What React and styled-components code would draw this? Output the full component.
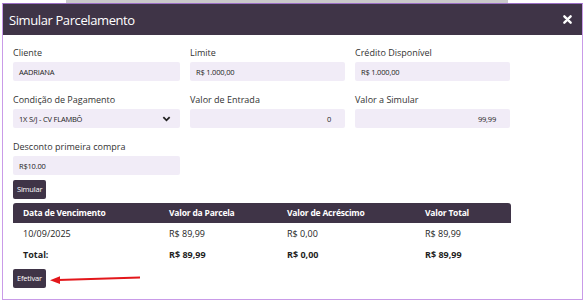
import styled, { createGlobalStyle } from "styled-components";

const GlobalStyle = createGlobalStyle`
  body {
    margin: 0;
    background: #ffffff;
    font-family: "Open Sans", "Noto Sans", sans-serif;
  }
`;

const rows = [
  { date: "10/09/2025", parcela: "R$ 89,99", acrescimo: "R$ 0,00", total: "R$ 89,99" },
];

function App() {
  return (
    <>
      <GlobalStyle />
      <Backdrop />
      <Modal>
        <Header>
          <Title>Simular Parcelamento</Title>
          <Close aria-label="Fechar">
            <svg width="9" height="9" viewBox="0 0 10 10">
              <path d="M1.5 1.5 L8.5 8.5 M8.5 1.5 L1.5 8.5" stroke="#fff" strokeWidth="2.6" strokeLinecap="round" />
            </svg>
          </Close>
        </Header>
        <Body>
          <FormGrid>
            <Field>
              <Label>Cliente</Label>
              <Input>AADRIANA</Input>
            </Field>
            <Field>
              <Label>Limite</Label>
              <Input>R$ 1.000,00</Input>
            </Field>
            <Field>
              <Label>Crédito Disponível</Label>
              <Input>R$ 1.000,00</Input>
            </Field>
            <Field>
              <Label>Condição de Pagamento</Label>
              <Input>
                <span>1X S/J - CV FLAMBÔ</span>
                <svg width="9" height="6" viewBox="0 0 10 6">
                  <path d="M1.5 1 L5 4.5 L8.5 1" fill="none" stroke="#222" strokeWidth="2" />
                </svg>
              </Input>
            </Field>
            <Field>
              <Label>Valor de Entrada</Label>
              <Input align="right">0</Input>
            </Field>
            <Field>
              <Label>Valor a Simular</Label>
              <Input align="right">99,99</Input>
            </Field>
            <Field>
              <Label>Desconto primeira compra</Label>
              <Input>R$10.00</Input>
            </Field>
          </FormGrid>
          <Button>Simular</Button>
          <Table>
            <thead>
              <tr>
                <Th>Data de Vencimento</Th>
                <Th>Valor da Parcela</Th>
                <Th>Valor de Acréscimo</Th>
                <Th>Valor Total</Th>
              </tr>
            </thead>
            <tbody>
              {rows.map((r) => (
                <tr key={r.date}>
                  <Td>{r.date}</Td>
                  <Td>{r.parcela}</Td>
                  <Td>{r.acrescimo}</Td>
                  <Td>{r.total}</Td>
                </tr>
              ))}
              <tr>
                <Td bold>Total:</Td>
                <Td bold>R$ 89,99</Td>
                <Td bold>R$ 0,00</Td>
                <Td bold>R$ 89,99</Td>
              </tr>
            </tbody>
          </Table>
          <Footer>
            <Button>Efetivar</Button>
            <svg width="92" height="10" viewBox="0 0 92 10">
              <path d="M91 3.6 L9 6" stroke="#e3171b" strokeWidth="2" />
              <path d="M1 6.2 L11 2.2 L11 10 Z" fill="#e3171b" />
            </svg>
          </Footer>
        </Body>
      </Modal>
    </>
  );
}

const Backdrop = styled.div`
  height: 3px;
  margin: 0 77px 0 66px;
  background: #c9c9c9;
`;

const Modal = styled.div`
  margin: 0 2px;
  height: 297px;
  box-sizing: border-box;
  border: 1px solid #c99be8;
  border-top-color: #9b6ec4;
  background: #fff;
`;

const Header = styled.div`
  height: 31px;
  background: #3f3447;
  display: flex;
  align-items: center;
  justify-content: space-between;
  padding: 0 10px 0 6px;
`;

const Title = styled.h2`
  margin: 0;
  color: #fff;
  font-size: 13px;
  letter-spacing: -0.4px;
  font-weight: 400;
`;

const Close = styled.span`
  display: flex;
  align-items: center;
`;

const Body = styled.div`
  padding: 11px 0 0 10px;
`;

const FormGrid = styled.div`
  display: grid;
  grid-template-columns: 167px 155px 155px;
  column-gap: 10px;
  row-gap: 12px;
`;

const Field = styled.div`
  display: flex;
  flex-direction: column;
  gap: 3px;
`;

const Label = styled.label`
  font-size: 9px;
  line-height: 13px;
  color: #333;
`;

const Input = styled.div`
  height: 19px;
  box-sizing: border-box;
  background: #f1ecf7;
  border-radius: 2px;
  display: flex;
  align-items: center;
  justify-content: ${(p) => (p.align === "right" ? "flex-end" : "space-between")};
  padding: 0 ${(p) => (p.align === "right" ? "14px" : "9px")} 0 6px;
  font-size: 7.5px;
  letter-spacing: -0.2px;
  color: #222;
`;

const Button = styled.button`
  align-self: flex-start;
  background: #3f3447;
  color: #fff;
  border: none;
  border-radius: 2px;
  height: 19px;
  padding: 0 4px;
  font-family: inherit;
  font-size: 7.5px;
  letter-spacing: -0.2px;
  margin-top: 4px;
`;

const Table = styled.table`
  width: 498px;
  margin-top: 4px;
  border-collapse: separate;
  border-spacing: 0;
  font-size: 9px;
  color: #1e1e1e;

  th:first-child { border-top-left-radius: 3px; }
  th:last-child { border-top-right-radius: 3px; }
`;

const Th = styled.th`
  background: #3f3447;
  color: #fff;
  text-align: left;
  font-weight: 700;
  font-size: 8.5px;
  letter-spacing: -0.2px;
  height: 20px;
  padding: 0 0 0 10px;
  &:nth-child(1) { width: 136px; }
  &:nth-child(2) { width: 108px; }
  &:nth-child(3) { width: 128px; }
`;

const Td = styled.td`
  height: 21px;
  padding: 0 0 0 10px;
  font-weight: ${(p) => (p.bold ? 700 : 400)};
`;

const Footer = styled.div`
  display: flex;
  align-items: center;
  gap: 3px;

  svg { margin-top: 6px; }
`;

export default App;
